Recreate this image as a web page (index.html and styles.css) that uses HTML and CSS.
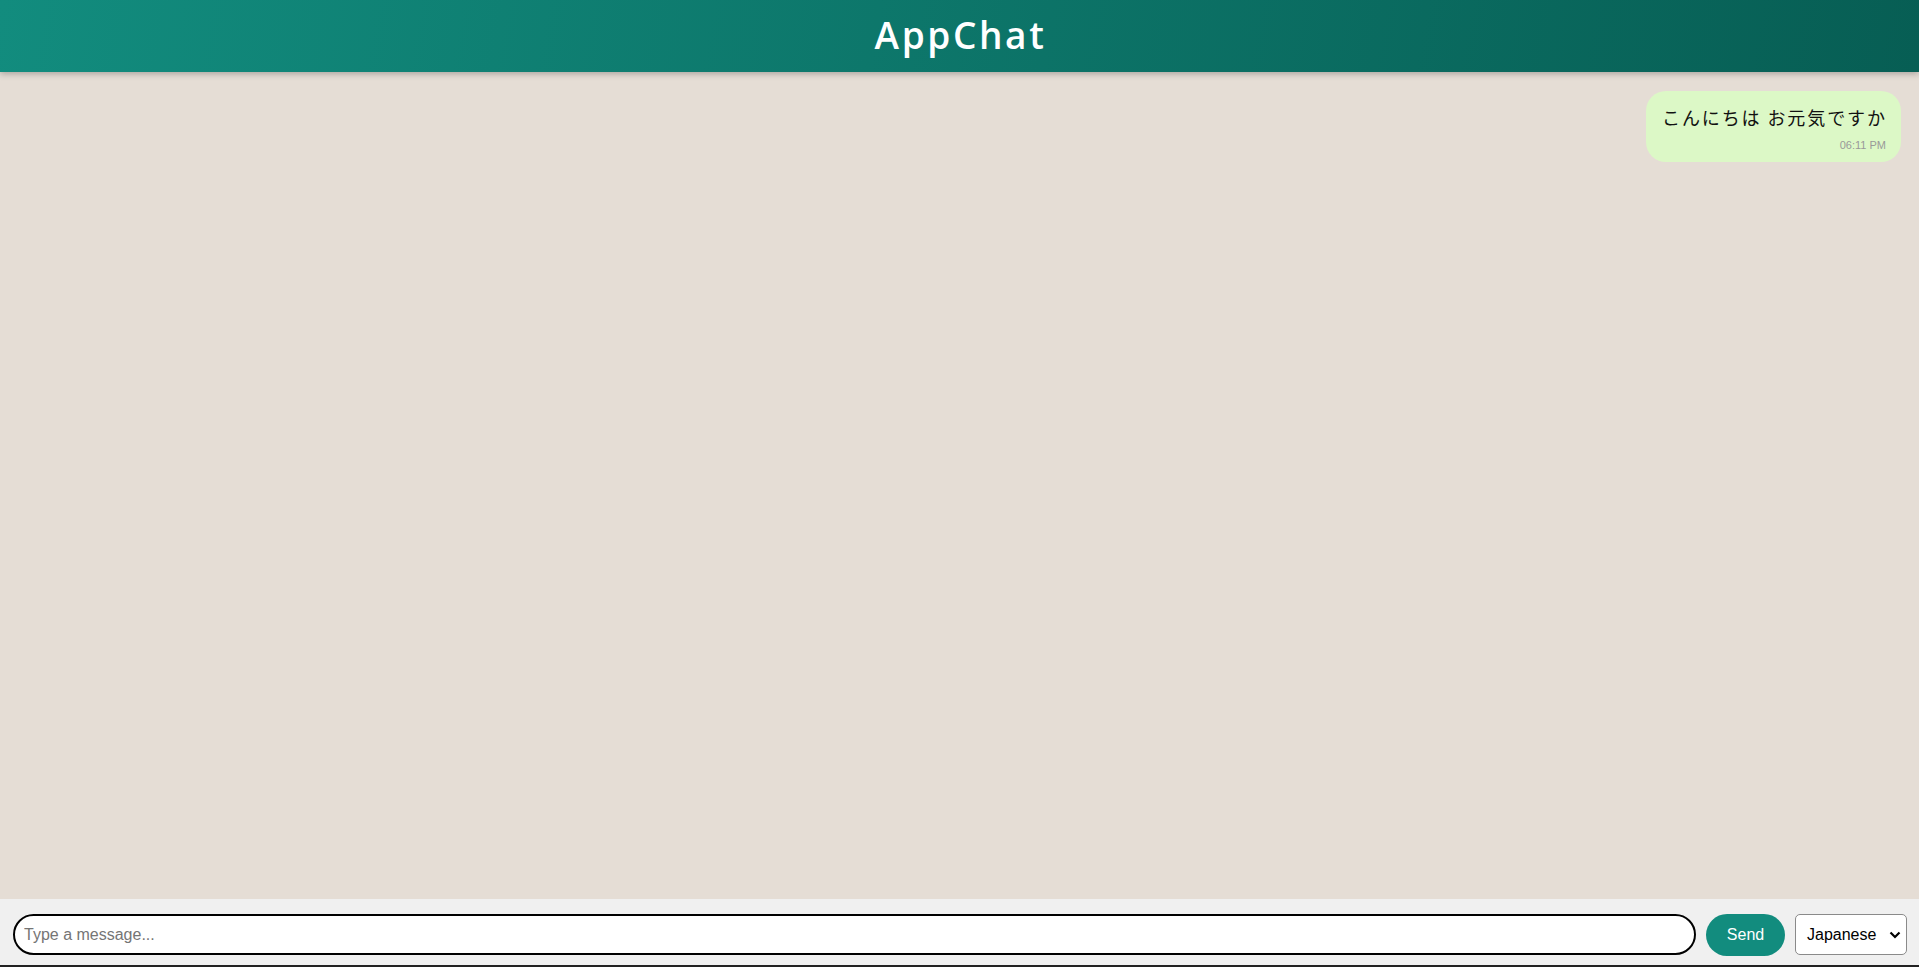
FILE: index.html
```html
<!DOCTYPE html>
<html lang="en">
<head>
<meta charset="utf-8">
<title>AppChat</title>
<link rel="stylesheet" href="styles.css">
</head>
<body>
<div class="app">
  <header class="header"><h1 class="title">AppChat</h1></header>
  <main class="chat">
    <div class="bubble sent">
      <div class="text">こんにちは お元気ですか</div>
      <div class="time">06:11 PM</div>
    </div>
  </main>
  <footer class="composer">
    <input class="msg-input" type="text" placeholder="Type a message...">
    <button class="send">Send</button>
    <div class="lang">
      <span>Japanese</span>
      <svg class="chev" width="12" height="8" viewBox="0 0 12 8"><path d="M1.5 1.5 L6 6 L10.5 1.5" fill="none" stroke="#000" stroke-width="2.2"/></svg>
    </div>
  </footer>
</div>
</body>
</html>
```
FILE: styles.css
```css
* { box-sizing: border-box; }
html, body { margin: 0; padding: 0; height: 100%; }
body {
  font-family: "Liberation Sans", Arial, "Noto Sans CJK JP", sans-serif;
  background: #e5ddd5;
}
.app {
  display: flex;
  flex-direction: column;
  height: 967px;
}
.header {
  height: 72px;
  flex: none;
  display: flex;
  align-items: center;
  justify-content: center;
  background: linear-gradient(100deg, #128c7e 0%, #075e54 100%);
  box-shadow: 0 2px 6px rgba(0,0,0,0.25);
  position: relative;
  z-index: 1;
  padding-bottom: 4px;
}
.title {
  margin: 0;
  color: #fff;
  font-family: "Open Sans", "DejaVu Sans", sans-serif;
  font-weight: 600;
  font-size: 37px;
  letter-spacing: 2.6px;
  line-height: 1;
  padding-left: 2px;
}
.chat {
  flex: 1;
  display: flex;
  flex-direction: column;
  align-items: flex-end;
  padding: 19px 18px;
  background: #e5ddd5;
}
.bubble {
  background: #dcf8c6;
  border-radius: 20px;
  padding: 12px 15px 0 16px;
  width: 255px;
  height: 71px;
}
.text {
  font-family: "Noto Sans CJK JP", "Liberation Sans", sans-serif;
  font-size: 18px;
  line-height: 28px;
  color: #111;
  letter-spacing: 1.9px;
  white-space: nowrap;
}
.time {
  text-align: right;
  font-size: 11px;
  line-height: 13px;
  color: #999;
  margin-top: 8px;
}
.composer {
  flex: none;
  display: flex;
  align-items: center;
  gap: 10px;
  padding: 14px 12px 9px 13px;
  background: #f0f0f0;
  border-bottom: 2px solid #222;
  height: 68px;
}
.msg-input {
  flex: 1;
  height: 41px;
  border: 2px solid #000;
  border-radius: 21px;
  padding: 0 12px 0 9px;
  font-size: 16px;
  font-family: "Liberation Sans", Arial, sans-serif;
  background: #fff;
  outline: none;
}
.msg-input::placeholder { color: #757575; }
.send {
  width: 79px;
  height: 42px;
  border: none;
  border-radius: 21px;
  background: #128c7e;
  color: #fff;
  font-size: 16px;
  font-family: "Liberation Sans", Arial, sans-serif;
}
.lang {
  width: 112px;
  height: 41px;
  border: 1px solid #8a8a8a;
  border-radius: 5px;
  background: #fff;
  display: flex;
  align-items: center;
  justify-content: space-between;
  padding: 0 5px 0 11px;
  font-size: 16px;
  color: #000;
}
```
